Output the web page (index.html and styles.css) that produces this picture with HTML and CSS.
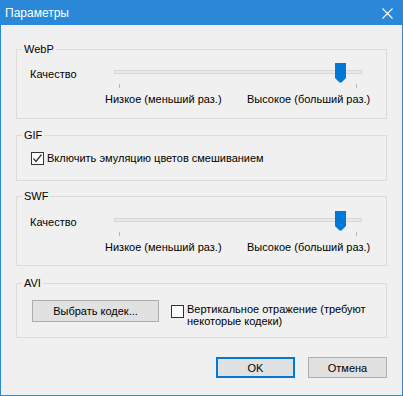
FILE: index.html
```html
<!DOCTYPE html>
<html lang="ru">
<head>
  <meta charset="UTF-8">
  <title>Параметры</title>
  <link rel="stylesheet" href="styles.css">
</head>
<body>
  <div class="window">
    <div class="titlebar">
      <span class="title">Параметры</span>
      <svg class="close" width="11" height="11" viewBox="0 0 11 11">
        <path d="M0.5 0.5L10.5 10.5M10.5 0.5L0.5 10.5" stroke="#fff" stroke-width="1.1" fill="none"/>
      </svg>
    </div>

    <div class="content">
      <fieldset class="group group-webp">
        <legend>WebP</legend>
        <div class="slider-row">
          <span class="slider-label">Качество</span>
          <div class="slider">
            <div class="slider-track"></div>
            <svg class="slider-thumb" style="left: 221px" width="11" height="20" viewBox="0 0 11 20">
              <path d="M0 0H11V15L6.5 19.5H4.5L0 15Z" fill="#0078d7"/>
            </svg>
            <div class="slider-ticks"><i></i><i></i></div>
          </div>
        </div>
        <div class="scale-labels">
          <span class="scale-low">Низкое (меньший раз.)</span>
          <span>Высокое (больший раз.)</span>
        </div>
      </fieldset>

      <fieldset class="group group-gif">
        <legend>GIF</legend>
        <label class="check">
          <span class="check-box">
            <svg width="11" height="11" viewBox="0 0 11 11">
              <path d="M1.5 5.5L4 8.5L9.5 1.5" stroke="#333" stroke-width="1.3" fill="none"/>
            </svg>
          </span>
          <span>Включить эмуляцию цветов смешиванием</span>
        </label>
      </fieldset>

      <fieldset class="group group-swf">
        <legend>SWF</legend>
        <div class="slider-row">
          <span class="slider-label">Качество</span>
          <div class="slider">
            <div class="slider-track"></div>
            <svg class="slider-thumb" style="left: 221px" width="11" height="20" viewBox="0 0 11 20">
              <path d="M0 0H11V15L6.5 19.5H4.5L0 15Z" fill="#0078d7"/>
            </svg>
            <div class="slider-ticks"><i></i><i></i></div>
          </div>
        </div>
        <div class="scale-labels">
          <span class="scale-low">Низкое (меньший раз.)</span>
          <span>Высокое (больший раз.)</span>
        </div>
      </fieldset>

      <fieldset class="group group-avi">
        <legend>AVI</legend>
        <div class="avi-row">
          <button class="btn btn-codec">Выбрать кодек...</button>
          <label class="check check-multi">
            <span class="check-box"></span>
            <span>Вертикальное отражение (требуют<br>некоторые кодеки)</span>
          </label>
        </div>
      </fieldset>

      <div class="actions">
        <button class="btn btn-default">OK</button>
        <button class="btn">Отмена</button>
      </div>
    </div>
  </div>
</body>
</html>
```

FILE: styles.css
```css
* {
  box-sizing: border-box;
}

body {
  margin: 0;
  font-family: "Liberation Sans", Arial, sans-serif;
  font-size: 11px;
  color: #000;
  white-space: nowrap;
}

.window {
  width: 403px;
  height: 396px;
  border: 1px solid #2b88d8;
  background: #f0f0f0;
}

.titlebar {
  height: 24px;
  background: #2b88d8;
  color: #fff;
  display: flex;
  align-items: center;
  justify-content: space-between;
  padding: 0 9px 0 4px;
}

.title {
  font-size: 12px;
}

.content {
  padding: 0 15px;
}

/* group boxes */
.group {
  margin: 0;
  padding: 0 13px;
  border: 1px solid #dcdcdc;
  min-width: 0;
}

.group legend {
  line-height: 15px;
  padding: 0 2px;
  margin-left: -8px;
}

.group-webp {
  margin-top: 17px;
  height: 77px;
  padding-top: 6px;
}

.group-gif {
  margin-top: 9px;
  height: 53px;
  padding-top: 8px;
}

.group-swf {
  margin-top: 8px;
  height: 77px;
  padding-top: 7px;
}

.group-avi {
  margin-top: 10px;
  height: 62px;
  padding-top: 9px;
}

/* slider */
.slider-row {
  display: flex;
  align-items: flex-start;
}

.slider-label {
  width: 84px;
  line-height: 15px;
  margin-top: 4px;
}

.slider {
  position: relative;
  width: 248px;
  height: 25px;
  padding-top: 7px;
}

.slider-track {
  height: 4px;
  background: #e7eaea;
  border: 1px solid #d6d6d6;
}

.slider-thumb {
  position: absolute;
  top: 0;
  display: block;
}

.slider-ticks {
  display: flex;
  justify-content: space-between;
  padding: 0 5px;
  margin-top: 10px;
}

.slider-ticks i {
  width: 1px;
  height: 4px;
  background: #b5b5b5;
}

.scale-labels {
  display: flex;
  margin-top: 4px;
  padding-left: 75px;
  line-height: 15px;
}

.scale-low {
  width: 142px;
}

/* checkbox */
.check {
  display: flex;
  align-items: center;
  gap: 3px;
  line-height: 15px;
  margin-left: 1px;
}

.check-box {
  width: 13px;
  height: 13px;
  border: 1px solid #333;
  background: #fff;
  display: flex;
  align-items: center;
  justify-content: center;
  flex: none;
}

.check-box svg {
  display: block;
}

.check-multi {
  align-items: flex-start;
  line-height: 12px;
  margin-left: 12px;
  margin-top: 3px;
}

.check-multi .check-box {
  margin-top: 2px;
}

/* buttons */
.avi-row {
  display: flex;
  align-items: flex-start;
  padding-left: 2px;
}

.btn {
  font-family: inherit;
  font-size: 11px;
  color: #000;
  background: #e1e1e1;
  border: 1px solid #adadad;
  height: 21px;
  width: 79px;
  padding: 0;
  border-radius: 0;
}

.btn-codec {
  width: 127px;
  height: 22px;
}

.btn-default {
  border: 2px solid #0078d7;
}

.actions {
  display: flex;
  justify-content: flex-end;
  gap: 13px;
  margin-top: 19px;
}
```
